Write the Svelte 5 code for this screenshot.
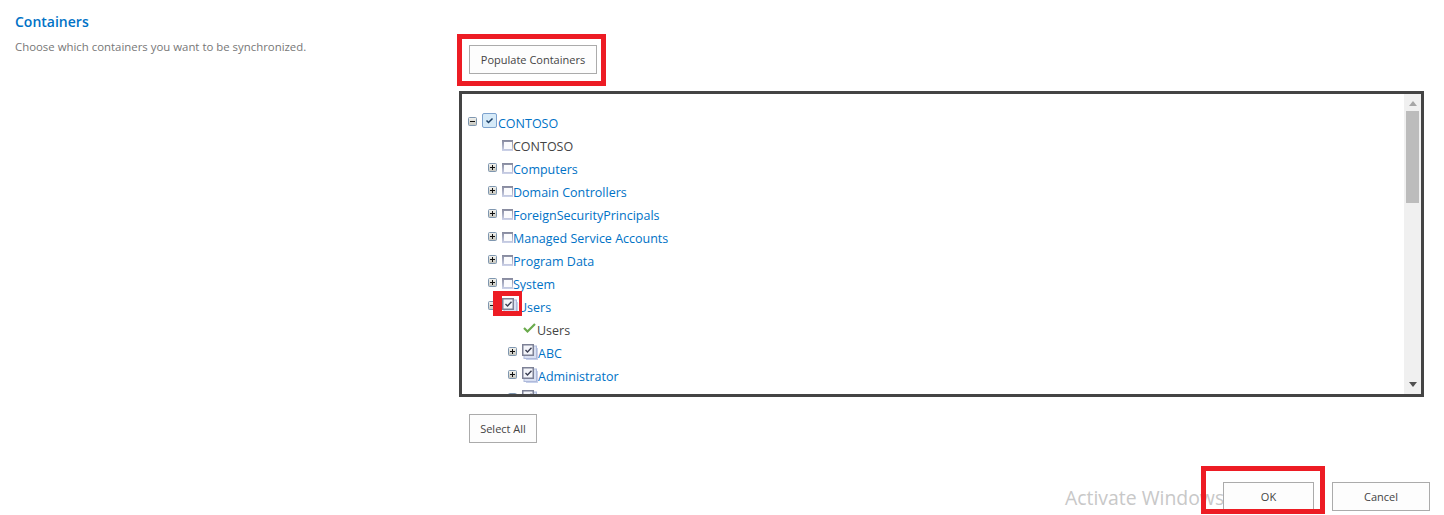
<script>
    // depth, toggle (plus / minus / none), check state, label, link or plain
    const rows = [
        { depth: 0, toggle: 'minus', check: 'root', label: 'CONTOSO', link: true },
        { depth: 1, toggle: 'none', check: 'empty', label: 'CONTOSO', link: false },
        { depth: 1, toggle: 'plus', check: 'empty', label: 'Computers', link: true },
        { depth: 1, toggle: 'plus', check: 'empty', label: 'Domain Controllers', link: true },
        { depth: 1, toggle: 'plus', check: 'empty', label: 'ForeignSecurityPrincipals', link: true },
        { depth: 1, toggle: 'plus', check: 'empty', label: 'Managed Service Accounts', link: true },
        { depth: 1, toggle: 'plus', check: 'empty', label: 'Program Data', link: true },
        { depth: 1, toggle: 'plus', check: 'empty', label: 'System', link: true },
        { depth: 1, toggle: 'minus', check: 'stack', label: 'Users', link: true, marked: true },
        { depth: 2, toggle: 'none', check: 'green', label: 'Users', link: false },
        { depth: 2, toggle: 'plus', check: 'stack', label: 'ABC', link: true },
        { depth: 2, toggle: 'plus', check: 'stack', label: 'Administrator', link: true },
        { depth: 2, toggle: 'minus', check: 'stack', label: '', link: true }
    ];
</script>

{#snippet toggleIcon(kind)}
    <svg class="toggle" viewBox="0 0 9 9" width="9" height="9">
        <defs>
            <linearGradient id="tg" x1="0" y1="0" x2="0" y2="1">
                <stop offset="0" stop-color="#f4f4f0" />
                <stop offset="1" stop-color="#c4c4bc" />
            </linearGradient>
        </defs>
        <rect x="0.5" y="0.5" width="8" height="8" rx="1" fill="url(#tg)" stroke="#7f97b0" />
        <path d="M2 4.5h5" stroke="#111" fill="none" />
        {#if kind === 'plus'}
            <path d="M4.5 2v5" stroke="#111" fill="none" />
        {/if}
    </svg>
{/snippet}

{#snippet checkIcon(kind)}
    {#if kind === 'root'}
        <svg class="check root" viewBox="0 0 16 16" width="16" height="16">
            <rect x="0.5" y="0.5" width="14" height="14" rx="1.5" fill="#d6eaf8" stroke="#7da2ce" />
            <path d="M4.5 7.5l2 2 4-4" stroke="#1c3f66" stroke-width="1.5" fill="none" />
        </svg>
    {:else if kind === 'empty'}
        <svg class="check empty" viewBox="0 0 11 11" width="11" height="11">
            <defs>
                <linearGradient id="eg" x1="0" y1="0" x2="0" y2="1">
                    <stop offset="0" stop-color="#85889c" />
                    <stop offset="1" stop-color="#cdd3ea" />
                </linearGradient>
            </defs>
            <rect width="11" height="11" fill="url(#eg)" />
            <rect x="2" y="2" width="8" height="7" fill="#fbfbfd" />
        </svg>
    {:else if kind === 'green'}
        <svg class="check green" viewBox="0 0 15 14" width="15" height="14">
            <path d="M2 7l3.5 3.5L13 3" stroke="#6aaa4c" stroke-width="2.2" fill="none" />
        </svg>
    {:else}
        <svg class="check stack" viewBox="0 0 16 16" width="16" height="16">
            <rect x="4" y="4" width="12" height="12" fill="#c6d0ea" />
            <rect x="2" y="2" width="12.5" height="12.5" fill="#d9e0f2" stroke="#aeb9da" />
            <rect x="0.75" y="0.75" width="10.5" height="10.5" fill="#f4f5fa" stroke="#7d8196" stroke-width="1.5" />
            <path d="M3.5 6l2 2L9.5 3.8" stroke="#3a3e52" stroke-width="1.4" fill="none" />
        </svg>
    {/if}
{/snippet}

<main>
    <section class="settings">
        <div class="intro">
            <h2>Containers</h2>
            <p>Choose which containers you want to be synchronized.</p>
        </div>

        <div class="controls">
            <div class="marker">
                <button class="populate">Populate Containers</button>
            </div>

            <div class="tree-box">
                <ul class="tree">
                    {#each rows as row}
                        <li style="padding-left: {6 + row.depth * 20}px">
                            <span class="toggle-slot">
                                {#if row.toggle !== 'none'}
                                    {@render toggleIcon(row.toggle)}
                                {/if}
                            </span>
                            <span class="check-slot">
                                {@render checkIcon(row.check)}
                                {#if row.marked}
                                    <span class="check-marker"></span>
                                {/if}
                            </span>
                            <span class:link={row.link}>{row.label}</span>
                        </li>
                    {/each}
                </ul>

                <div class="scrollbar">
                    <span class="arrow up"></span>
                    <span class="thumb"></span>
                    <span class="arrow down"></span>
                </div>
            </div>

            <button class="select-all">Select All</button>
        </div>
    </section>

    <footer>
        <span class="watermark">Activate Windows</span>
        <button class="ok">OK<span class="ok-marker"></span></button>
        <button class="cancel">Cancel</button>
    </footer>
</main>

<style>
    :global(body) {
        margin: 0;
        background: #fff;
    }

    main {
        width: 1444px;
        height: 515px;
        overflow: hidden;
        font-family: "Open Sans", "Noto Sans", sans-serif;
        color: #444;
    }

    .settings {
        display: flex;
        padding-left: 15px;
    }

    .intro {
        width: 442px;
        padding-top: 13px;
    }

    h2 {
        margin: 0;
        font-size: 14px;
        line-height: 18px;
        font-weight: 600;
        color: #0072c6;
    }

    p {
        margin: 8px 0 0;
        font-size: 11.4px;
        line-height: 15px;
        color: #777;
    }

    .controls {
        padding-top: 34px;
    }

    button {
        box-sizing: border-box;
        padding: 0;
        border: 1px solid #ababab;
        background: #fdfdfd;
        font-family: inherit;
        font-size: 11px;
        color: #444;
    }

    .marker {
        box-sizing: border-box;
        width: 149px;
        height: 52px;
        border: 5px solid #ed1c24;
        padding: 6px 4px 7px 7px;
    }

    .populate {
        width: 128px;
        height: 29px;
    }

    .tree-box {
        box-sizing: border-box;
        display: flex;
        justify-content: space-between;
        width: 965px;
        height: 306px;
        margin: 5px 0 0 2px;
        border: 3px solid #444;
        overflow: hidden;
    }

    .tree {
        list-style: none;
        margin: 0;
        padding: 18px 0 0;
    }

    li {
        display: flex;
        align-items: center;
        height: 23px;
        font-size: 12.5px;
        color: #444;
        white-space: nowrap;
    }

    .link {
        color: #0072c6;
    }

    .toggle-slot {
        display: flex;
        width: 14px;
        flex: none;
        margin-top: -5px;
    }

    .check-slot {
        position: relative;
        display: flex;
    }

    .root {
        margin-bottom: 5px;
    }

    .empty {
        margin-bottom: 2px;
    }

    .stack {
        margin-bottom: 3px;
    }

    .green {
        margin-bottom: 5px;
    }

    .check-marker {
        position: absolute;
        box-sizing: border-box;
        left: -9px;
        top: -7px;
        width: 29px;
        height: 25px;
        border-style: solid;
        border-color: #ed1c24;
        border-width: 5px 3px 5px 9px;
    }

    .scrollbar {
        box-sizing: border-box;
        display: flex;
        flex-direction: column;
        align-items: center;
        flex: none;
        width: 17px;
        background: #f0f0f0;
        padding-top: 7px;
    }

    .arrow {
        width: 0;
        height: 0;
        border-left: 4px solid transparent;
        border-right: 4px solid transparent;
    }

    .arrow.up {
        border-bottom: 5px solid #a6a6a6;
    }

    .arrow.down {
        margin-top: auto;
        margin-bottom: 7px;
        border-top: 5px solid #505050;
    }

    .thumb {
        width: 13px;
        height: 92px;
        margin-top: 5px;
        background: #bcbcbc;
    }

    .select-all {
        display: block;
        width: 68px;
        height: 29px;
        margin: 17px 0 0 12px;
    }

    footer {
        position: relative;
        display: flex;
        gap: 18px;
        justify-content: flex-end;
        padding: 39px 14px 0 0;
    }

    .ok,
    .cancel {
        height: 29px;
    }

    .ok {
        position: relative;
        width: 91px;
    }

    .cancel {
        width: 98px;
    }

    .ok-marker {
        position: absolute;
        left: -23px;
        top: -17px;
        width: 114px;
        height: 38px;
        border: 5px solid #ed1c24;
    }

    .watermark {
        position: absolute;
        left: 1065px;
        top: 41px;
        font-size: 19.4px;
        line-height: 27px;
        color: #c8c8c8;
    }
</style>
